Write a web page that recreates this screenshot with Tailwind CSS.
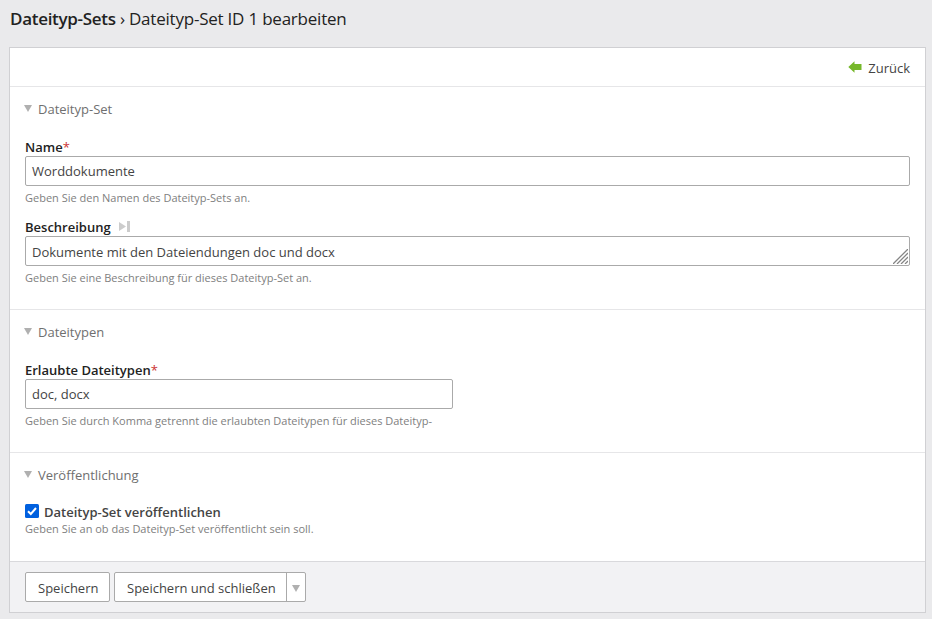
<!DOCTYPE html>
<html lang="de">
<head>
<meta charset="utf-8">
<title>Dateityp-Sets</title>
<script src="https://cdn.jsdelivr.net/npm/@tailwindcss/browser@4"></script>
</head>
<body class="bg-[#eaeaec] h-[619px] overflow-hidden font-['Open_Sans','Noto_Sans',sans-serif] text-[13px] leading-[18px] text-[#444] whitespace-nowrap">
  <h1 class="h-[47px] pl-[10px] pt-[7px] text-[17px] leading-6 text-[#222] tracking-[-0.22px]"><span class="font-semibold tracking-[-0.3px]">Dateityp-Sets</span> › <span>Dateityp-Set ID 1 bearbeiten</span></h1>
  <main class="ml-[9px] w-[917px] h-[566px] bg-white border border-[#d0d0d3] flex flex-col">
    <div class="h-[39px] shrink-0 border-b border-[#e6e6e8] flex justify-end items-start pt-[11px] pr-[15px]">
      <a class="flex"><svg class="mt-[2px] mr-[6px]" width="14" height="12" viewBox="0 0 14 12"><path d="M0.3 6 6.5 0.2V3H13.5V9H6.5V11.8Z" fill="#76b82a"/></svg><span>Zurück</span></a>
    </div>
    <fieldset class="h-[223px] shrink-0 border-b border-[#e6e6e8] px-[15px] pt-[13px]">
      <h2 class="flex text-[#6f6f6f] h-[18px]"><svg class="mt-[5px] -ml-px mr-[6px]" width="8" height="7" viewBox="0 0 8 7"><path d="M0 0H8L4 7Z" fill="#b0b0b0"/></svg><span>Dateityp-Set</span></h2>
      <div class="mt-5">
        <h3 class="h-[18px] font-semibold text-[#222]"><span>Name</span><span class="text-[#c33] font-normal">*</span></h3>
        <div class="h-[30px] border border-[#aaa] rounded-[2px] px-[6px] pt-[5px]"><span>Worddokumente</span></div>
        <p class="mt-1 h-4 text-[11px] leading-4 text-[#808080]"><span>Geben Sie den Namen des Dateityp-Sets an.</span></p>
      </div>
      <div class="mt-3">
        <h3 class="h-[18px] font-semibold text-[#222] flex"><span>Beschreibung</span><svg class="ml-2 mt-[3px]" width="12" height="11" viewBox="0 0 12 11"><path d="M0 1 7 5.5 0 10ZM8 0H11V11H8Z" fill="#ccc"/></svg></h3>
        <div class="h-[30px] border border-[#aaa] rounded-[2px] pl-[6px] pt-[6px] flex justify-between"><span>Dokumente mit den Dateiendungen doc und docx</span><svg class="mt-[6px] mr-px" width="15" height="15" viewBox="0 0 15 15" stroke="#858585" stroke-width="1.3"><path d="M0 15 15 0M4 15 15 4M8 15 15 8M12 15 15 12"/></svg></div>
        <p class="mt-1 h-4 text-[11px] leading-4 text-[#808080]"><span>Geben Sie eine Beschreibung für dieses Dateityp-Set an.</span></p>
      </div>
    </fieldset>
    <fieldset class="h-[143px] shrink-0 border-b border-[#e6e6e8] px-[15px] pt-[13px]">
      <h2 class="flex text-[#6f6f6f] h-[18px]"><svg class="mt-[5px] -ml-px mr-[6px]" width="8" height="7" viewBox="0 0 8 7"><path d="M0 0H8L4 7Z" fill="#b0b0b0"/></svg><span>Dateitypen</span></h2>
      <div class="mt-5 w-[428px]">
        <h3 class="h-[18px] font-semibold text-[#222]"><span>Erlaubte Dateitypen</span><span class="text-[#c33] font-normal">*</span></h3>
        <div class="h-[30px] border border-[#aaa] rounded-[2px] px-[6px] pt-[5px]"><span>doc, docx</span></div>
        <p class="mt-1 h-4 text-[11px] leading-4 text-[#808080]"><span>Geben Sie durch Komma getrennt die erlaubten Dateitypen für dieses Dateityp-</span></p>
      </div>
    </fieldset>
    <fieldset class="h-[108px] shrink-0 px-[15px] pt-[13px]">
      <h2 class="flex text-[#6f6f6f] h-[18px]"><svg class="mt-[5px] -ml-px mr-[6px]" width="8" height="7" viewBox="0 0 8 7"><path d="M0 0H8L4 7Z" fill="#b0b0b0"/></svg><span>Veröffentlichung</span></h2>
      <div class="mt-[19px]">
        <label class="h-[18px] font-semibold flex"><svg class="mt-px mr-[5px]" width="14" height="14" viewBox="0 0 14 14"><rect width="14" height="14" rx="1.5" fill="#0060df"/><path d="M3 7.3 5.8 10 11 4" fill="none" stroke="#fff" stroke-width="2"/></svg><span>Dateityp-Set veröffentlichen</span></label>
        <p class="h-4 text-[11px] leading-4 text-[#808080]"><span>Geben Sie an ob das Dateityp-Set veröffentlicht sein soll.</span></p>
      </div>
    </fieldset>
    <footer class="flex-1 bg-[#f2f2f4] border-t border-[#d9d9dc] pl-[15px] pt-[10px] flex gap-1">
      <div class="h-[30px] w-[85px] border border-[#aaa] rounded-[2px] bg-white pl-3 pt-[6px]"><span>Speichern</span></div>
      <div class="h-[30px] w-[192px] border border-[#aaa] rounded-[2px] bg-white flex">
        <div class="w-[172px] border-r border-[#aaa] pl-3 pt-[6px]"><span>Speichern und schließen</span></div>
        <svg class="mt-[12px] ml-[5px]" width="8" height="7" viewBox="0 0 8 7"><path d="M0 0H8L4 7Z" fill="#b0b0b0"/></svg>
      </div>
    </footer>
  </main>
</body>
</html>
